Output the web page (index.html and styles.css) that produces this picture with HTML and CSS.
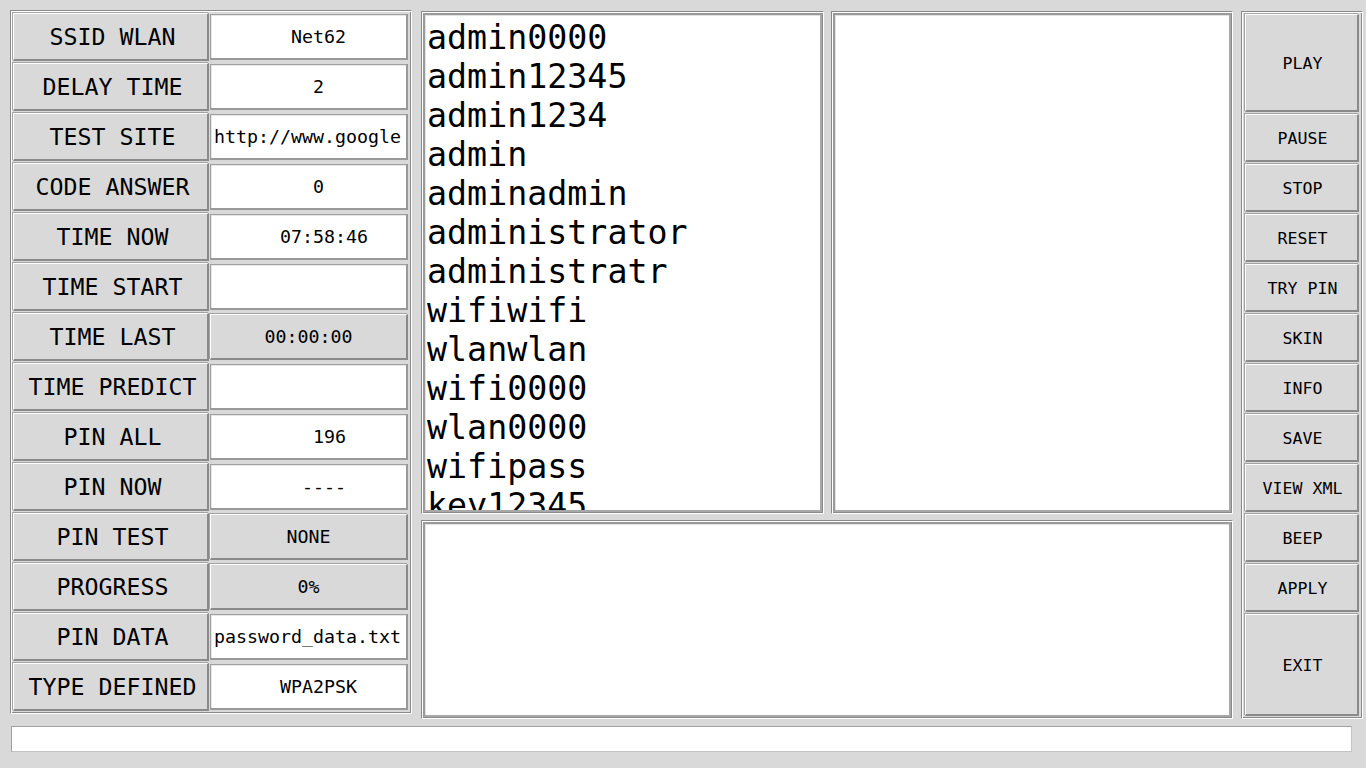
FILE: index.html
```html
<!DOCTYPE html>
<html>
<head>
<meta charset="utf-8">
<title>WiFi PIN</title>
<link rel="stylesheet" href="styles.css">
</head>
<body>
<div class="app">
  <div class="main">
    <section class="panel left-panel">
      <div class="row"><div class="label-btn">SSID WLAN</div><div class="cell"><div class="entry">       Net62</div></div></div>
      <div class="row"><div class="label-btn">DELAY TIME</div><div class="cell"><div class="entry">         2</div></div></div>
      <div class="row"><div class="label-btn">TEST SITE</div><div class="cell"><div class="entry">http://www.google</div></div></div>
      <div class="row"><div class="label-btn">CODE ANSWER</div><div class="cell"><div class="entry">         0</div></div></div>
      <div class="row"><div class="label-btn">TIME NOW</div><div class="cell"><div class="entry">      07:58:46</div></div></div>
      <div class="row"><div class="label-btn">TIME START</div><div class="cell"><div class="entry"></div></div></div>
      <div class="row"><div class="label-btn">TIME LAST</div><div class="cell"><div class="value-btn">00:00:00</div></div></div>
      <div class="row"><div class="label-btn">TIME PREDICT</div><div class="cell"><div class="entry"></div></div></div>
      <div class="row"><div class="label-btn">PIN ALL</div><div class="cell"><div class="entry">         196</div></div></div>
      <div class="row"><div class="label-btn">PIN NOW</div><div class="cell"><div class="entry">        ----</div></div></div>
      <div class="row"><div class="label-btn">PIN TEST</div><div class="cell"><div class="value-btn">NONE</div></div></div>
      <div class="row"><div class="label-btn">PROGRESS</div><div class="cell"><div class="value-btn">0%</div></div></div>
      <div class="row"><div class="label-btn">PIN DATA</div><div class="cell"><div class="entry">password_data.txt</div></div></div>
      <div class="row"><div class="label-btn">TYPE DEFINED</div><div class="cell"><div class="entry">      WPA2PSK</div></div></div>
    </section>

    <section class="middle">
      <div class="middle-top">
        <div class="panel box list-box">
          <div class="well">
            <ul class="pw-list">
              <li>admin0000</li>
              <li>admin12345</li>
              <li>admin1234</li>
              <li>admin</li>
              <li>adminadmin</li>
              <li>administrator</li>
              <li>administratr</li>
              <li>wifiwifi</li>
              <li>wlanwlan</li>
              <li>wifi0000</li>
              <li>wlan0000</li>
              <li>wifipass</li>
              <li>key12345</li>
            </ul>
          </div>
        </div>
        <div class="panel box info-box">
          <div class="well"></div>
        </div>
      </div>
      <div class="panel box log-box">
        <div class="well"></div>
      </div>
    </section>

    <section class="panel right-panel">
      <div class="cmd cmd-big"><div class="cmd-btn">PLAY</div></div>
      <div class="cmd"><div class="cmd-btn">PAUSE</div></div>
      <div class="cmd"><div class="cmd-btn">STOP</div></div>
      <div class="cmd"><div class="cmd-btn">RESET</div></div>
      <div class="cmd"><div class="cmd-btn">TRY PIN</div></div>
      <div class="cmd"><div class="cmd-btn">SKIN</div></div>
      <div class="cmd"><div class="cmd-btn">INFO</div></div>
      <div class="cmd"><div class="cmd-btn">SAVE</div></div>
      <div class="cmd"><div class="cmd-btn">VIEW XML</div></div>
      <div class="cmd"><div class="cmd-btn">BEEP</div></div>
      <div class="cmd"><div class="cmd-btn">APPLY</div></div>
      <div class="cmd cmd-exit"><div class="cmd-btn">EXIT</div></div>
    </section>
  </div>
  <div class="status"></div>
</div>
</body>
</html>
```

FILE: styles.css
```css
* { box-sizing: border-box; }

html, body {
  margin: 0;
  padding: 0;
}

body {
  background: #d9d9d9;
  font-family: "DejaVu Sans Mono", "Liberation Mono", monospace;
  color: #000;
  width: 1366px;
  height: 768px;
  overflow: hidden;
}

.app {
  padding: 10px 0 0 10px;
}

.main {
  display: flex;
  align-items: flex-start;
}

/* groove frame */
.panel {
  border: 1px solid;
  border-color: #8a8a8a #ffffff #ffffff #8a8a8a;
  box-shadow: inset 1px 1px 0 #ffffff, inset -1px -1px 0 #8a8a8a;
  padding: 1px;
}

/* ---------- left panel ---------- */
.left-panel {
  width: 402px;
  height: 704px;
  display: flex;
  flex-direction: column;
}

.row {
  height: 50px;
  display: grid;
  grid-template-columns: 198px 200px;
}

.label-btn {
  margin: 1px;
  padding-left: 4px;
  background: #d9d9d9;
  border-style: solid;
  border-width: 1px 2px 2px 1px;
  border-color: #ffffff #8a8a8a #8a8a8a #ffffff;
  box-shadow: -1px -1px 0 #a3a3a3;
  display: flex;
  align-items: center;
  justify-content: center;
  font-size: 23.25px;
  white-space: pre;
}

.cell {
  padding: 2px 2px 2px 0;
}

.entry,
.value-btn {
  height: 100%;
  border-style: solid;
  border-width: 1px 2px 2px 1px;
  display: flex;
  align-items: center;
  font-size: 18.3px;
  white-space: pre;
  overflow: hidden;
}

.entry {
  background: #ffffff;
  border-color: #a0a0a0 #999999 #999999 #a0a0a0;
  box-shadow: inset 1px 1px 0 #e6e6e6;
  padding-left: 3px;
}

.value-btn {
  background: #d9d9d9;
  border-color: #ffffff #8a8a8a #8a8a8a #ffffff;
  box-shadow: -1px -1px 0 #a3a3a3;
  justify-content: center;
}

/* ---------- middle ---------- */
.middle {
  width: 812px;
  margin-left: 9px;
  margin-top: 1px;
  display: flex;
  flex-direction: column;
  gap: 6px;
}

.middle-top {
  display: flex;
  gap: 7px;
  height: 503px;
}

.list-box { width: 403px; height: 503px; }
.info-box { width: 402px; height: 503px; }
.log-box { width: 812px; height: 199px; }

.box {
  display: flex;
}

.well {
  flex: 1;
  background: #ffffff;
  border: 2px solid;
  border-color: #9a9a9a #a8a8a8 #a8a8a8 #9a9a9a;
  box-shadow: inset 1px 1px 0 #e2e2e2;
  overflow: hidden;
}

.pw-list {
  list-style: none;
  margin: 3px 0 0 0;
  padding: 0 0 0 2px;
  font-size: 33.3px;
  line-height: 39px;
}

.pw-list li {
  white-space: nowrap;
}

/* ---------- right panel ---------- */
.right-panel {
  width: 122px;
  height: 708px;
  margin-left: 8px;
  margin-top: 1px;
  display: flex;
  flex-direction: column;
}

.cmd {
  height: 50px;
  padding: 1px 2px;
  display: flex;
}

.cmd-big { height: 100px; }
.cmd-exit { height: 104px; }

.cmd-btn {
  flex: 1;
  padding: 1px 0 0 2px;
  background: #d9d9d9;
  border-style: solid;
  border-width: 1px 2px 2px 1px;
  border-color: #ffffff #8a8a8a #8a8a8a #ffffff;
  box-shadow: -1px -1px 0 #a3a3a3;
  display: flex;
  align-items: center;
  justify-content: center;
  font-size: 16.6px;
  white-space: pre;
}

/* ---------- status bar ---------- */
.status {
  margin: 7px 0 0 1px;
  width: 1341px;
  height: 26px;
  background: #ffffff;
  border: 1px solid;
  border-color: #a0a0a0 #c4c4c4 #c4c4c4 #a0a0a0;
}
```
